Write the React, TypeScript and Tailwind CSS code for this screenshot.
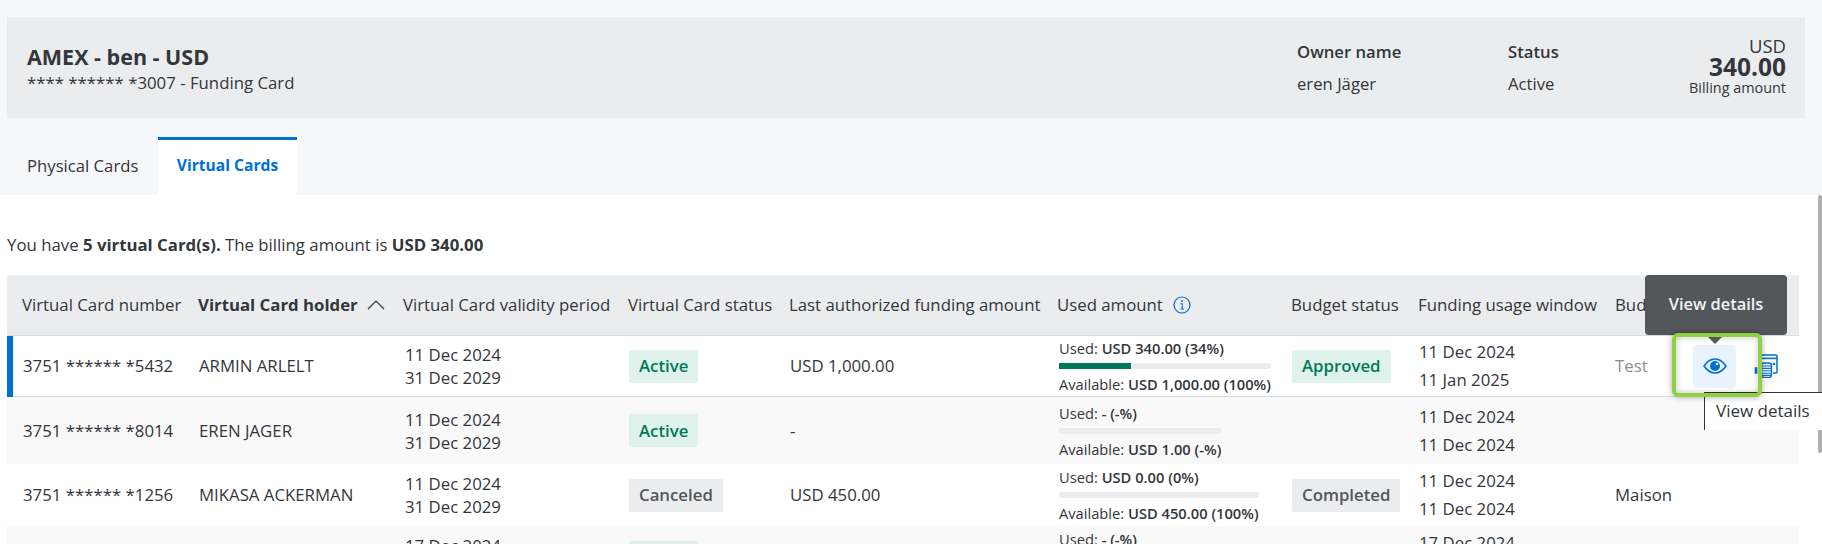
import React from "react";

const GRID = "grid grid-cols-[191px_205px_225px_161px_268px_234px_127px_197px_78px_1fr] items-center";

function Eye() {
  return (
    <svg width="24" height="16" viewBox="0 0 24 16" fill="none">
      <path d="M1 8C4 3.6 7.8 1 12 1s8 2.6 11 7c-3 4.4-6.8 7-11 7S4 12.4 1 8Z" stroke="#0070d2" strokeWidth="1.6" strokeLinejoin="round" />
      <circle cx="12" cy="8" r="5" fill="#0070d2" />
      <circle cx="14" cy="6" r="1.3" fill="#e8f3fd" />
    </svg>
  );
}

function CardCoins() {
  return (
    <svg width="24" height="24" viewBox="0 0 24 24" fill="none" stroke="#0070d2">
      <path d="M7 3.5V2a1 1 0 0 1 1-1h14a1 1 0 0 1 1 1v16a1 1 0 0 1-1 1h-3" strokeWidth="1.5" />
      <path d="M7 4.4h16" strokeWidth="1.6" />
      <circle cx="20" cy="10" r="1.3" fill="#0070d2" stroke="none" />
      <rect x="7.5" y="9" width="10" height="14.4" rx="2.5" fill="#fff" strokeWidth="1.4" />
      <path d="M8 12h9M8 14.4h9M8 16.8h9M8 19.2h9M8 21.4h9" strokeWidth="1.1" />
      <path d="M2 13.2v6.6" strokeWidth="2.6" />
    </svg>
  );
}

function InfoIcon() {
  return (
    <svg width="18" height="18" viewBox="0 0 18 18" fill="none" stroke="#0070d2">
      <circle cx="9" cy="9" r="8" strokeWidth="1.2" />
      <path d="M7.4 7.8H9.2V13M7.4 13h3.6" strokeWidth="1.1" />
      <circle cx="8.9" cy="5" r="0.9" fill="#0070d2" stroke="none" />
    </svg>
  );
}

function Badge({ kind, children }: { kind: "green" | "grey"; children: React.ReactNode }) {
  return (
    <span
      className={
        kind === "green"
          ? "inline-flex h-[33px] items-center rounded-[2px] bg-[#e0f2ec] px-[10px] text-[16.8px] font-semibold text-[#00795b]"
          : "inline-flex h-[33px] items-center rounded-[2px] bg-[#ebecee] px-[10px] text-[16.8px] font-semibold text-[#53565a]"
      }
    >
      {children}
    </span>
  );
}

function Usage({ used, avail, bar }: { used: string; avail: string; bar: boolean }) {
  return (
    <div className="flex w-fit flex-col text-[14.7px] leading-[16px] whitespace-nowrap">
      <div>
        Used: <b className="font-semibold">{used}</b>
      </div>
      <div className="mt-[7px] mb-[7px] h-[6px] rounded-full bg-[#ebecee]">
        {bar && <div className="h-[6px] w-[34%] bg-[#00795b]" />}
      </div>
      <div>
        Available: <b className="font-semibold">{avail}</b>
      </div>
    </div>
  );
}

type Row = {
  num: string;
  holder: string;
  from: string;
  to: string;
  status: React.ReactNode;
  last: string;
  used: string;
  avail: string;
  bar?: boolean;
  budget?: React.ReactNode;
  w1: string;
  w2: string;
  name?: React.ReactNode;
  actions?: React.ReactNode;
  cls: string;
};

const rows: Row[] = [
  {
    num: "3751 ****** *5432",
    holder: "ARMIN ARLELT",
    from: "11 Dec 2024",
    to: "31 Dec 2029",
    status: <Badge kind="green">Active</Badge>,
    last: "USD 1,000.00",
    used: "USD 340.00 (34%)",
    avail: "USD 1,000.00 (100%)",
    bar: true,
    budget: <Badge kind="green">Approved</Badge>,
    w1: "11 Dec 2024",
    w2: "11 Jan 2025",
    name: <span className="text-[#8a8d8f]">Test</span>,
    actions: (
      <div className="flex items-center gap-[18px]">
        <div className="relative h-[43px] w-[43px]">
          <div className="flex h-[43px] w-[43px] items-center justify-center rounded-[4px] bg-[#e8f3fd]">
            <Eye />
          </div>
          <div className="absolute -top-[12px] -left-[21px] z-30 h-[64px] w-[90px] rounded-[6px] border-[4px] border-[#8fd13f] shadow-[0_0_6px_rgba(0,0,0,0.35),inset_0_0_6px_rgba(0,0,0,0.25)]" />
          <div className="absolute -top-[8px] left-[15px] z-40 h-0 w-0 border-x-[7px] border-t-[7px] border-x-transparent border-t-[#53565a]" />
          <div className="absolute -top-[70px] -left-[48px] z-20 flex h-[60px] w-[142px] items-center justify-center rounded-[4px] bg-[#53565a] text-[16.4px] font-semibold text-[#f2f3f4]">
            View details
          </div>
        </div>
        <CardCoins />
      </div>
    ),
    cls: "h-[60px] bg-white border-b border-[#d9dadc] box-content",
  },
  {
    num: "3751 ****** *8014",
    holder: "EREN JAGER",
    from: "11 Dec 2024",
    to: "31 Dec 2029",
    status: <Badge kind="green">Active</Badge>,
    last: "-",
    used: "- (-%)",
    avail: "USD 1.00 (-%)",
    w1: "11 Dec 2024",
    w2: "11 Dec 2024",
    cls: "h-[67px] bg-[#f9f9f9]",
  },
  {
    num: "3751 ****** *1256",
    holder: "MIKASA ACKERMAN",
    from: "11 Dec 2024",
    to: "31 Dec 2029",
    status: <Badge kind="grey">Canceled</Badge>,
    last: "USD 450.00",
    used: "USD 0.00 (0%)",
    avail: "USD 450.00 (100%)",
    budget: <Badge kind="grey">Completed</Badge>,
    w1: "11 Dec 2024",
    w2: "11 Dec 2024",
    name: "Maison",
    cls: "h-[62px] bg-white",
  },
  {
    num: "3751 ****** *7720",
    holder: "LEVI ACKERMAN",
    from: "17 Dec 2024",
    to: "31 Dec 2029",
    status: <Badge kind="green">Active</Badge>,
    last: "-",
    used: "- (-%)",
    avail: "USD 1.00 (-%)",
    w1: "17 Dec 2024",
    w2: "17 Dec 2024",
    cls: "h-[62px] bg-[#f9f9f9]",
  },
];

const heads = [
  "Virtual Card number",
  "Virtual Card holder",
  "Virtual Card validity period",
  "Virtual Card status",
  "Last authorized funding amount",
  "Used amount",
  "Budget status",
  "Funding usage window",
  "Budget name",
];

export default function App() {
  return (
    <div
      className="relative h-[544px] w-[1822px] overflow-hidden bg-white text-[16.8px] text-[#33363a]"
      style={{ fontFamily: '"Open Sans", "Noto Sans", sans-serif' }}
    >
      {/* Top */}
      <div className="h-[195px] bg-[#f6f7f9] pt-[17px] pl-[7px] pr-[17px]">
        <div className="flex h-[101px] items-center bg-[#ebecee] pl-[20px] pr-[19px]">
          <div className="flex-1">
            <div className="text-[21.5px] leading-[27px] font-bold">AMEX - ben - USD</div>
            <div className="mt-[3px] text-[16.8px] leading-[20px]">**** ****** *3007 - Funding Card</div>
          </div>
          <div className="w-[211px]">
            <div className="text-[16.7px] font-semibold leading-[20px]">Owner name</div>
            <div className="mt-[12px] text-[16.7px] leading-[20px]">eren Jäger</div>
          </div>
          <div className="w-[150px]">
            <div className="text-[16.7px] font-semibold leading-[20px]">Status</div>
            <div className="mt-[12px] text-[16.7px] leading-[20px]">Active</div>
          </div>
          <div className="mb-[2px] w-[128px] text-right">
            <div className="text-[18.5px] leading-[20px]">USD</div>
            <div className="text-[24.5px] font-bold leading-[22px]">340.00</div>
            <div className="text-[14.4px] leading-[20px]">Billing amount</div>
          </div>
        </div>
        <div className="mt-[19px] flex h-[58px] text-[16.7px]">
          <div className="flex w-[151px] items-center pb-[1px] pl-[20px]">Physical Cards</div>
          <div className="flex w-[139px] items-center justify-center border-t-[3px] border-[#0070d2] bg-white pb-[3px] text-[15.6px] font-bold text-[#0070d2]">
            Virtual Cards
          </div>
        </div>
      </div>

      {/* Content */}
      <div className="pl-[7px] pr-[23px]">
        <p className="mt-[40px] h-[20px] text-[16.8px] leading-[20px]">
          You have <b className="font-bold">5 virtual Card(s).</b> The billing amount is <b className="font-bold">USD 340.00</b>
        </p>
        <div className={`${GRID} mt-[20px] h-[61px] border-b border-[#d9dadc] bg-[#ebecee]`}>
          {heads.map((h, i) => (
            <div key={h} className={`flex items-center whitespace-nowrap ${i === 0 ? "pl-[15px]" : ""} ${i === 1 ? "font-bold" : ""}`}>
              {h}
              {i === 1 && (
                <svg className="ml-[9px]" width="18" height="10" viewBox="0 0 18 10" fill="none" stroke="#33363a" strokeWidth="1.2">
                  <path d="M1 9l8-8 8 8" />
                </svg>
              )}
              {i === 5 && (
                <span className="ml-[10px] flex">
                  <InfoIcon />
                </span>
              )}
            </div>
          ))}
          <div className="flex justify-end pr-[12px]">
            <InfoIcon />
          </div>
        </div>
        {rows.map((r, idx) => (
          <div key={r.num} className={`${GRID} relative ${r.cls}`}>
            {idx === 0 && <div className="absolute top-0 left-0 h-[61px] w-[6px] bg-[#0070d2]" />}
            <div className="pl-[16px] whitespace-nowrap">{r.num}</div>
            <div className="pl-[1px] whitespace-nowrap">{r.holder}</div>
            <div className="pl-[2px] leading-[23px]">
              <div>{r.from}</div>
              <div>{r.to}</div>
            </div>
            <div className="pl-[1px]">{r.status}</div>
            <div className="pl-[1px] whitespace-nowrap">{r.last}</div>
            <div className="pl-[2px]">
              <Usage used={r.used} avail={r.avail} bar={!!r.bar} />
            </div>
            <div className="pl-[1px]">{r.budget}</div>
            <div className="pl-[1px] leading-[28px]">
              <div>{r.w1}</div>
              <div>{r.w2}</div>
            </div>
            <div>{r.name}</div>
            <div>{r.actions}</div>
          </div>
        ))}
      </div>

      {/* Native browser tooltip */}
      <div className="absolute top-[392px] left-[1704px] z-10 h-[38px] w-[118px] border-t border-l border-[#333333] bg-white pl-[11px] pt-[8px] text-[17px] leading-[20px] whitespace-nowrap">
        View details
      </div>

      {/* Scrollbar */}
      <div className="absolute top-[195px] right-0 h-[258px] w-[4px] rounded-[2px] bg-[#b0b0b0]" />
    </div>
  );
}
